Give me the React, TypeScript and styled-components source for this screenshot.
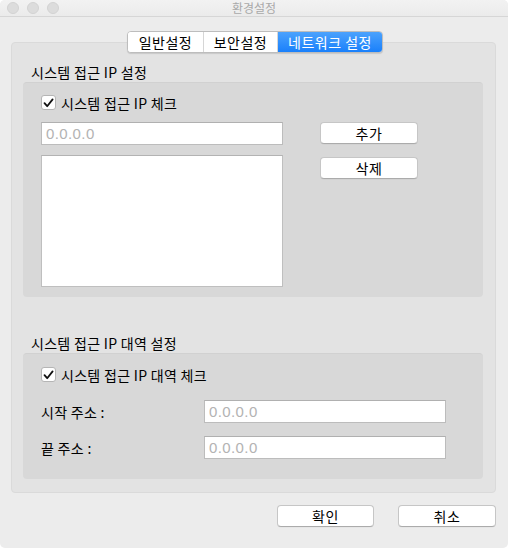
import React from "react";
import styled, { createGlobalStyle } from "styled-components";

const Global = createGlobalStyle`
  html, body { margin: 0; padding: 0; background: #ffffff; }
  body { font-family: "Noto Sans CJK KR", "Noto Sans", "Liberation Sans", sans-serif; }
  * { box-sizing: border-box; }
`;

const Window = styled.div`
  width: 508px;
  height: 548px;
  background: #ececec;
  border-radius: 5px;
  overflow: hidden;
  display: flex;
  flex-direction: column;
  font-size: 14px;
  letter-spacing: 0.3px;
  color: #000;
`;

const TitleBar = styled.div`
  height: 17px;
  flex: none;
  display: grid;
  grid-template-columns: 1fr auto 1fr;
  align-items: center;
  background: linear-gradient(#f2f2f2, #ebebeb);
  border-bottom: 1px solid #d6d6d6;
  padding: 0 7px;
`;

const Lights = styled.div`
  display: flex;
  gap: 8px;
`;

const Light = styled.span`
  width: 12px;
  height: 12px;
  border-radius: 50%;
  background: #dcdcdc;
  border: 1px solid #d2d2d2;
`;

const Title = styled.div`
  font-size: 12px;
  letter-spacing: 0;
  line-height: 16px;
  color: #a9a9a9;
`;

const Body = styled.div`
  flex: 1;
  display: flex;
  flex-direction: column;
  padding-top: 14px;
`;

const TabBar = styled.div`
  position: relative;
  z-index: 1;
  align-self: flex-start;
  margin-left: 127px;
  display: flex;
  height: 22px;
  border: 1px solid #bdbdbd;
  border-radius: 4px;
  background: #fff;
  box-shadow: 0 1px 1px rgba(0, 0, 0, 0.12);
  overflow: hidden;
`;

const Tab = styled.div<{ $w: number; $active?: boolean }>`
  width: ${(p) => p.$w}px;
  display: flex;
  align-items: center;
  justify-content: center;
  font-size: 14px;
  letter-spacing: 0.5px;
  line-height: 16px;
  color: ${(p) => (p.$active ? "#fff" : "#000")};
  background: ${(p) => (p.$active ? "linear-gradient(#4ba2fd, #1a80fb)" : "#fff")};
  & + & {
    border-left: 1px solid #d6d6d6;
  }
`;

const TabPanel = styled.div`
  margin: -11px 12px 0 11px;
  height: 451px;
  background: #e3e3e3;
  border: 1px solid #dadada;
  border-radius: 4px;
  padding: 21px 12px 12px 11px;
  display: flex;
  flex-direction: column;
`;

const SectionLabel = styled.div<{ $top?: number }>`
  margin-top: ${(p) => p.$top ?? 0}px;
  padding-left: 8px;
  line-height: 16px;
  height: 16px;
  margin-bottom: 2px;
`;

const GroupBox = styled.div<{ $h: number; $pad: string }>`
  height: ${(p) => p.$h}px;
  background: #d8d8d8;
  border-radius: 4px;
  border-top: 1px solid #d1d1d1;
  padding: ${(p) => p.$pad};
  display: flex;
  flex-direction: column;
`;

const CheckRow = styled.label`
  display: flex;
  align-items: center;
  gap: 5px;
  height: 15px;
  line-height: 16px;
`;

const CheckBox = styled.span`
  width: 15px;
  height: 15px;
  border-radius: 3px;
  background: #fff;
  border: 1px solid #b5b5b5;
  display: flex;
  align-items: center;
  justify-content: center;
`;

const IpGrid = styled.div`
  margin-top: 12px;
  display: grid;
  grid-template-columns: 242px 98px;
  column-gap: 37px;
`;

const LeftCol = styled.div`
  display: flex;
  flex-direction: column;
  gap: 10px;
`;

const RightCol = styled.div`
  display: flex;
  flex-direction: column;
  gap: 13px;
`;

const Field = styled.div<{ $w?: number }>`
  width: ${(p) => p.$w ?? 242}px;
  height: 23px;
  background: #fff;
  border: 1px solid #bcbcbc;
  border-top-color: #b0b0b0;
  padding-left: 4px;
  display: flex;
  align-items: center;
  font-size: 15px;
  letter-spacing: 0.4px;
  color: #b3b3b3;
  font-family: "Liberation Sans", "Noto Sans", sans-serif;
`;

const ListBox = styled.div`
  height: 132px;
  background: #fff;
  border: 1px solid #bfbfbf;
  border-top-color: #b3b3b3;
`;

const Button = styled.button<{ $w?: number }>`
  width: ${(p) => p.$w ?? 98}px;
  height: 22px;
  background: #fff;
  border: 1px solid #c6c6c6;
  border-bottom-color: #ababab;
  border-radius: 4px;
  font-family: inherit;
  font-size: 14px;
  letter-spacing: 0.5px;
  line-height: 16px;
  color: #000;
  padding: 0;
  box-shadow: 0 0.5px 0 rgba(0, 0, 0, 0.05);
`;

const AddrRow = styled.div`
  display: grid;
  grid-template-columns: 163px 242px;
  align-items: center;
  line-height: 16px;
`;

const AddrRows = styled.div`
  margin-top: 18px;
  display: flex;
  flex-direction: column;
  gap: 13px;
`;

const Footer = styled.div`
  display: flex;
  justify-content: flex-end;
  gap: 24px;
  padding: 12px 12px 0 0;
`;

const Check = () => (
  <svg width="11" height="10" viewBox="0 0 11 10">
    <path d="M1.5 5.2 L4.2 8.2 L9.6 1.4" fill="none" stroke="#111" strokeWidth="1.8" strokeLinecap="round" strokeLinejoin="round" />
  </svg>
);

export default function App() {
  return (
    <>
      <Global />
      <Window>
        <TitleBar>
          <Lights>
            <Light />
            <Light />
            <Light />
          </Lights>
          <Title>환경설정</Title>
          <div />
        </TitleBar>
        <Body>
          <TabBar>
            <Tab $w={75}>일반설정</Tab>
            <Tab $w={74}>보안설정</Tab>
            <Tab $w={105} $active>
              네트워크 설정
            </Tab>
          </TabBar>
          <TabPanel>
            <SectionLabel>시스템 접근 IP 설정</SectionLabel>
            <GroupBox $h={215} $pad="12px 0 0 18px">
              <CheckRow>
                <CheckBox>
                  <Check />
                </CheckBox>
                시스템 접근 IP 체크
              </CheckRow>
              <IpGrid>
                <LeftCol>
                  <Field>0.0.0.0</Field>
                  <ListBox />
                </LeftCol>
                <RightCol>
                  <Button>추가</Button>
                  <Button>삭제</Button>
                </RightCol>
              </IpGrid>
            </GroupBox>
            <SectionLabel $top={38}>시스템 접근 IP 대역 설정</SectionLabel>
            <GroupBox $h={126} $pad="13px 0 0 18px">
              <CheckRow>
                <CheckBox>
                  <Check />
                </CheckBox>
                시스템 접근 IP 대역 체크
              </CheckRow>
              <AddrRows>
                <AddrRow>
                  <span>시작 주소 :</span>
                  <Field>0.0.0.0</Field>
                </AddrRow>
                <AddrRow>
                  <span>끝 주소 :</span>
                  <Field>0.0.0.0</Field>
                </AddrRow>
              </AddrRows>
            </GroupBox>
          </TabPanel>
          <Footer>
            <Button $w={97}>확인</Button>
            <Button>취소</Button>
          </Footer>
        </Body>
      </Window>
    </>
  );
}
